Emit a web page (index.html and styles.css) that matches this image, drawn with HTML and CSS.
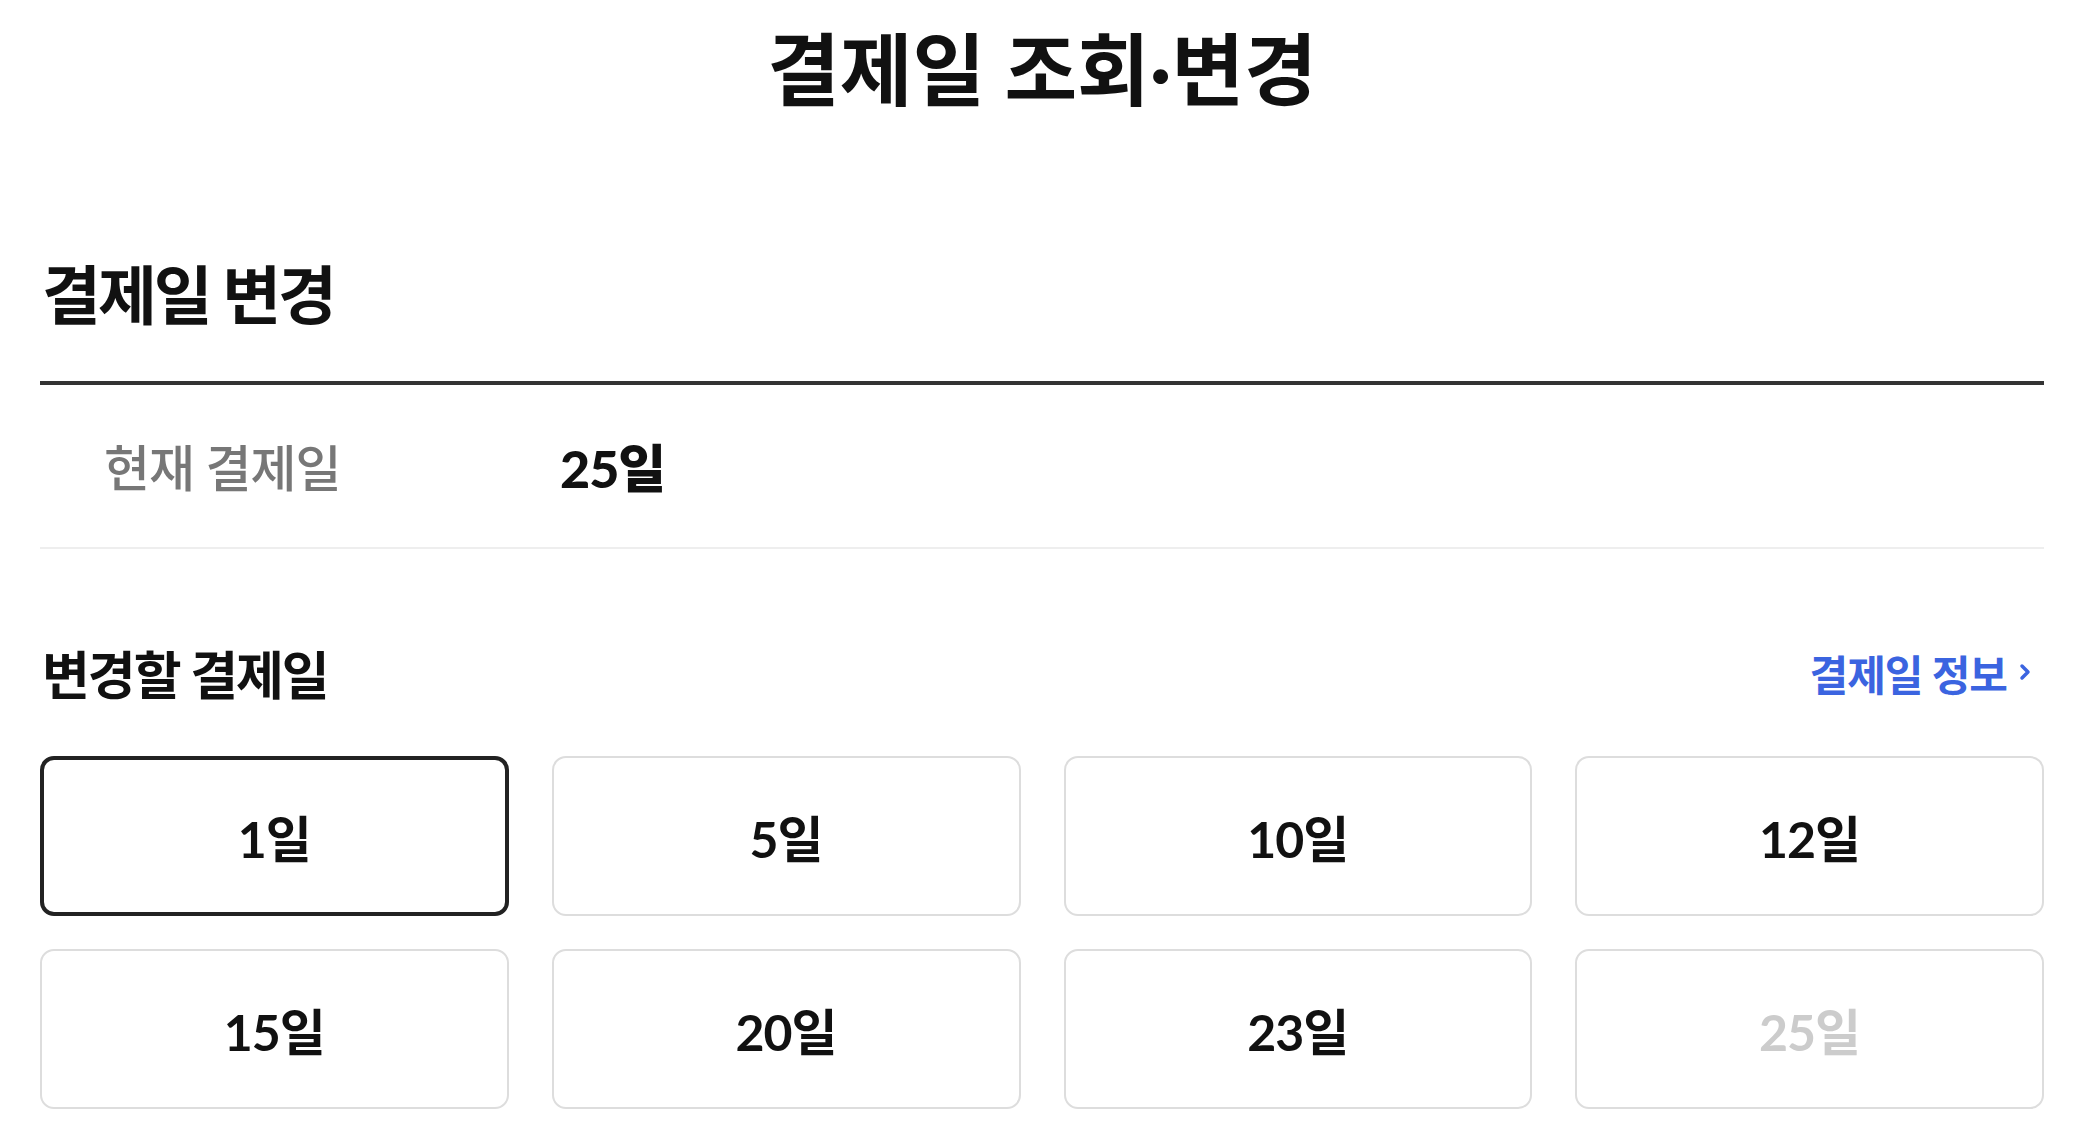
FILE: index.html
```html
<!DOCTYPE html>
<html lang="ko">
<head>
    <meta charset="UTF-8">
    <meta name="viewport" content="width=device-width, initial-scale=1.0">
    <title>결제일 조회·변경</title>
    <link rel="stylesheet" href="styles.css">
</head>
<body>
    <div class="page">
        <h1 class="title">결제일 조회·변경</h1>

        <h2 class="section-title">결제일 변경</h2>
        <div class="info-table">
            <div class="info-row">
                <span class="info-label">현재 결제일</span>
                <span class="info-value">25일</span>
            </div>
        </div>

        <div class="pick-head">
            <h3 class="pick-title">변경할 결제일</h3>
            <a class="pick-link" href="#">결제일 정보
                <svg class="chevron" width="12" height="20" viewBox="0 0 12 20"><polyline points="3,4 9,10 3,16" fill="none" stroke="currentColor" stroke-width="3.5" stroke-linecap="round" stroke-linejoin="round"/></svg>
            </a>
        </div>

        <div class="day-grid">
            <button class="day selected">1일</button>
            <button class="day">5일</button>
            <button class="day">10일</button>
            <button class="day">12일</button>
            <button class="day">15일</button>
            <button class="day">20일</button>
            <button class="day">23일</button>
            <button class="day" disabled>25일</button>
        </div>
    </div>
</body>
</html>
```

FILE: styles.css
```css
body {
    margin: 0;
    padding: 0;
    background: #fff;
    color: #111;
    font-family: Lato, "Noto Sans CJK KR", sans-serif;
}
.page {
    padding: 0 36px 0 40px;
}
.title {
    margin: 0;
    height: 140px;
    line-height: 140px;
    text-align: center;
    font-size: 79px;
    font-weight: 700;
    letter-spacing: 0;
    color: #111;
}
.section-title {
    margin: 100px 0 0;
    height: 110px;
    line-height: 110px;
    padding-left: 2px;
    font-size: 64px;
    font-weight: 700;
    letter-spacing: -3px;
}
.info-table {
    margin-top: 31px;
    border-top: 4px solid #333;
}
.info-row {
    display: flex;
    align-items: center;
    height: 164px;
    padding-bottom: 2px;
    box-sizing: border-box;
    border-bottom: 2px solid #eee;
}
.info-label {
    flex: 0 0 456px;
    padding-left: 64px;
    font-size: 50px;
    font-weight: 500;
    color: #777;
    letter-spacing: -1px;
}
.info-value {
    font-size: 52px;
    font-weight: 900;
    color: #111;
    letter-spacing: -1px;
}
.pick-head {
    display: flex;
    align-items: center;
    justify-content: space-between;
    margin-top: 83px;
    height: 80px;
}
.pick-title {
    margin: 0;
    padding-left: 2px;
    font-size: 52px;
    font-weight: 700;
    letter-spacing: -2px;
}
.pick-link {
    display: flex;
    align-items: center;
    gap: 12px;
    padding-right: 13px;
    font-size: 42px;
    font-weight: 700;
    color: #3b64e0;
    text-decoration: none;
    letter-spacing: -1px;
}
.chevron {
    display: block;
}
.day-grid {
    display: grid;
    grid-template-columns: repeat(4, 1fr);
    column-gap: 43px;
    row-gap: 33px;
    margin-top: 44px;
}
.day {
    height: 160px;
    border: 2px solid #ddd;
    border-radius: 14px;
    background: #fff;
    font-family: Lato, "Noto Sans CJK KR", sans-serif;
    font-size: 50px;
    font-weight: 700;
    color: #111;
    letter-spacing: -1px;
    padding: 0;
    cursor: pointer;
}
.day.selected {
    border: 4px solid #222;
}
.day:disabled {
    color: #ccc;
    cursor: default;
}
```
